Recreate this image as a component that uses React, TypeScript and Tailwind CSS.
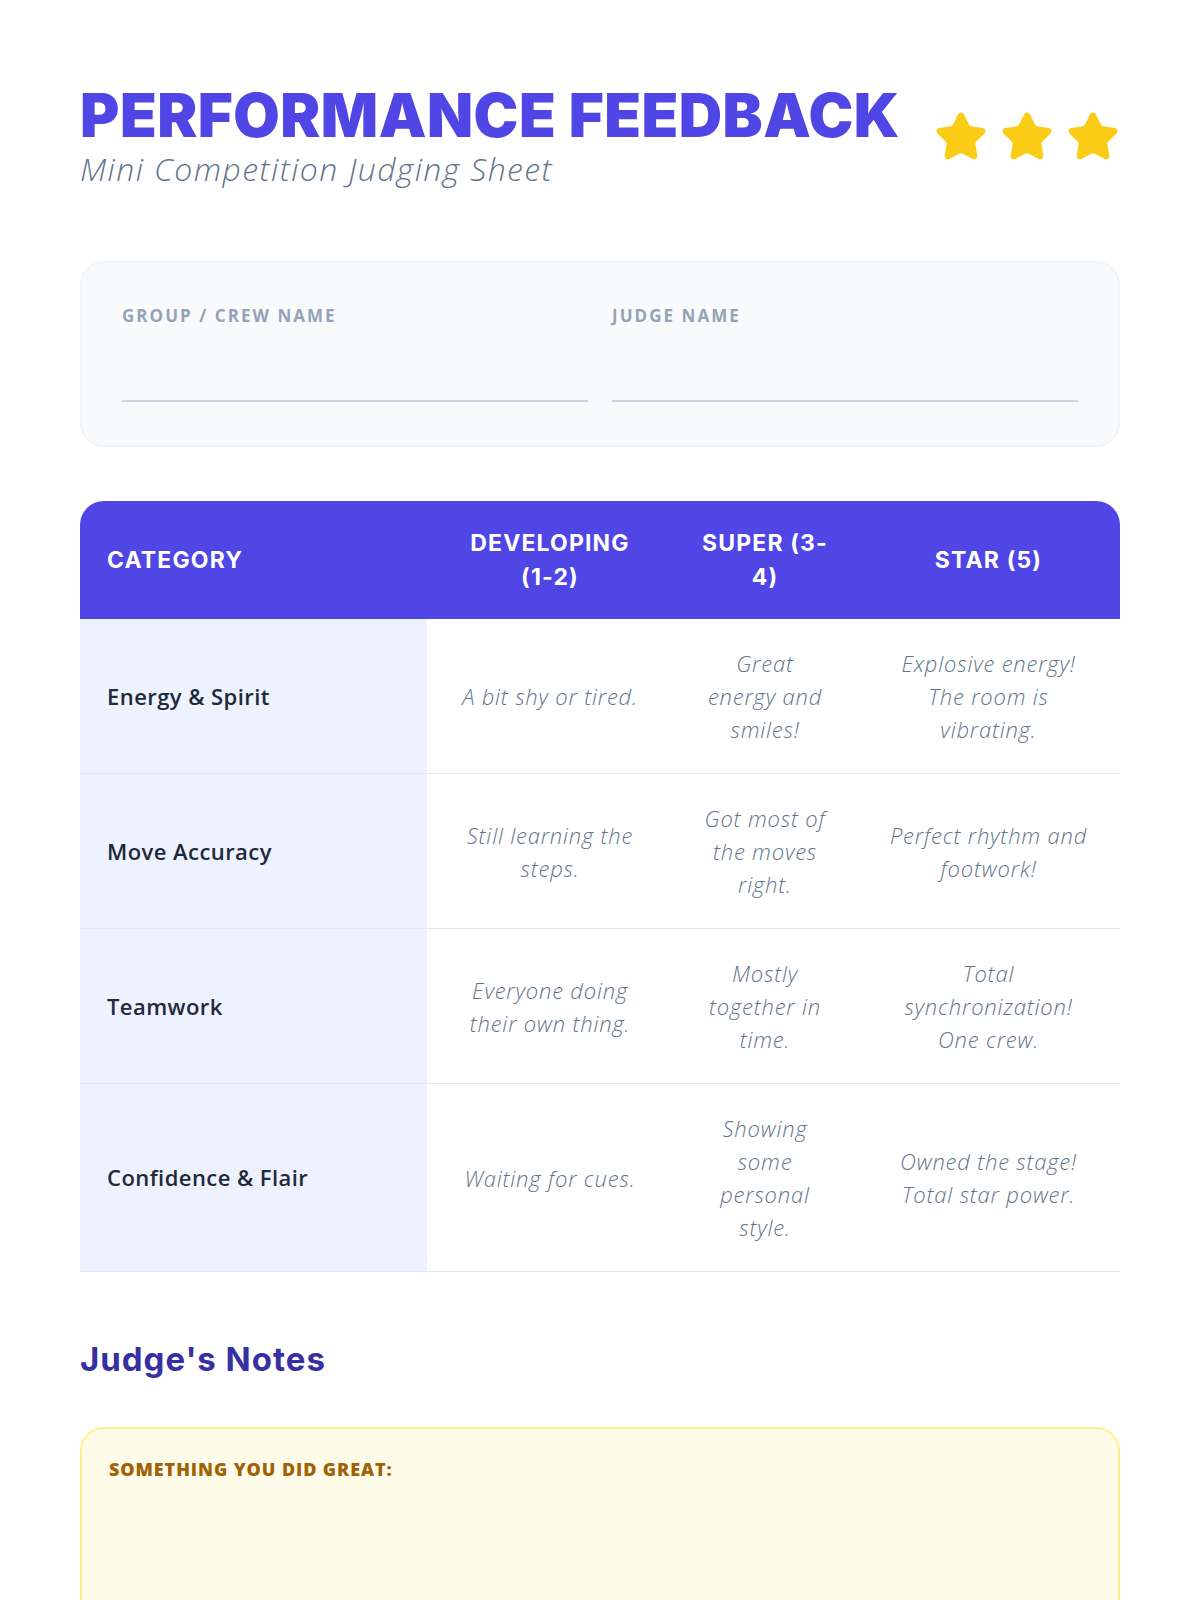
import React from "react";

const rows = [
  {
    name: "Energy & Spirit",
    dev: "A bit shy or tired.",
    sup: "Great\nenergy and\nsmiles!",
    star: "Explosive energy!\nThe room is\nvibrating.",
  },
  {
    name: "Move Accuracy",
    dev: "Still learning the\nsteps.",
    sup: "Got most of\nthe moves\nright.",
    star: "Perfect rhythm and\nfootwork!",
  },
  {
    name: "Teamwork",
    dev: "Everyone doing\ntheir own thing.",
    sup: "Mostly\ntogether in\ntime.",
    star: "Total\nsynchronization!\nOne crew.",
  },
  {
    name: "Confidence & Flair",
    dev: "Waiting for cues.",
    sup: "Showing\nsome\npersonal\nstyle.",
    star: "Owned the stage!\nTotal star power.",
  },
];

function Star() {
  return (
    <svg width="54" height="54" viewBox="0 0 24 24" fill="#facc15" stroke="#facc15" strokeWidth="1.8" strokeLinejoin="round">
      <path d="M11.525 2.295a.53.53 0 0 1 .95 0l2.31 4.679a2.123 2.123 0 0 0 1.595 1.16l5.166.756a.53.53 0 0 1 .294.904l-3.736 3.638a2.123 2.123 0 0 0-.611 1.878l.882 5.14a.53.53 0 0 1-.771.56l-4.618-2.428a2.122 2.122 0 0 0-1.973 0L6.396 21.01a.53.53 0 0 1-.77-.56l.881-5.139a2.122 2.122 0 0 0-.611-1.879L2.16 9.795a.53.53 0 0 1 .294-.906l5.165-.755a2.122 2.122 0 0 0 1.597-1.16z" />
    </svg>
  );
}

const cell = "flex items-center justify-center whitespace-pre-line px-6 pt-7 pb-[27px] text-center text-[22px] font-light italic leading-[33px] tracking-[0.8px] text-[#64748b]";

export default function App() {
  return (
    <div className="min-h-screen bg-white font-['Open_Sans','Noto_Sans',sans-serif]">
      <div className="w-[1200px] px-20 pt-[85px]">
        {/* header */}
        <div className="flex items-center justify-between">
          <div>
            <h1 className="font-['Inter',sans-serif] text-[60px] font-black leading-none tracking-[0.5px] text-[#4f46e5]">
              PERFORMANCE FEEDBACK
            </h1>
            <p className="mt-1 text-[32px] font-light italic leading-[40px] tracking-[1.4px] text-[#64748b]">
              Mini Competition Judging Sheet
            </p>
          </div>
          <div className="flex gap-[12px]">
            <Star />
            <Star />
            <Star />
          </div>
        </div>

        {/* names */}
        <div className="mt-[72px] grid grid-cols-2 gap-6 rounded-3xl border-2 border-[#f1f5f9] bg-[#f8fafc] px-10 pt-10 pb-[43px]">
          <div>
            <div className="text-[17px] font-bold uppercase leading-[25px] tracking-[0.12em] text-[#94a3b8]">Group / Crew Name</div>
            <div className="mt-3 h-[62px] border-b-2 border-[#cbd5e1]"></div>
          </div>
          <div>
            <div className="text-[17px] font-bold uppercase leading-[25px] tracking-[0.12em] text-[#94a3b8]">Judge Name</div>
            <div className="mt-3 h-[62px] border-b-2 border-[#cbd5e1]"></div>
          </div>
        </div>

        {/* rubric */}
        <div className="mt-[54px]">
          <div className="grid grid-cols-[347px_246px_184px_263px] rounded-t-3xl bg-[#4f46e5] font-['Inter',sans-serif] text-[23px] font-bold uppercase leading-[34px] tracking-[0.05em] text-white">
            <div className="flex items-center py-[25px] pl-[27px] pr-6">Category</div>
            <div className="flex items-center justify-center whitespace-pre-line px-6 py-[25px] text-center">{"Developing\n(1-2)"}</div>
            <div className="flex items-center justify-center whitespace-pre-line px-6 py-[25px] text-center">{"Super (3-\n4)"}</div>
            <div className="flex items-center justify-center px-6 py-[25px] text-center">Star (5)</div>
          </div>
          {rows.map((r) => (
            <div key={r.name} className="grid grid-cols-[347px_246px_184px_263px] border-b border-[#e2e8f0]">
              <div className="flex items-center bg-[#eef2ff] pl-[27px] pr-6 text-[22px] font-semibold tracking-[0.02em] text-[#1e293b]">{r.name}</div>
              <div className={cell}>{r.dev}</div>
              <div className={cell}>{r.sup}</div>
              <div className={cell}>{r.star}</div>
            </div>
          ))}
        </div>

        {/* notes */}
        <h2 className="mt-[67px] font-['Inter',sans-serif] text-[33px] font-bold leading-[40px] tracking-[0.03em] text-[#3730a3]">Judge's Notes</h2>
        <div className="mt-[48px] min-h-[220px] rounded-3xl border-2 border-[#fef08a] bg-[#fefce8] px-[27px] pt-[27px] pb-6">
          <div className="text-[18px] font-extrabold uppercase leading-[27px] tracking-[0.05em] text-[#a16207]">Something you did great:</div>
        </div>
      </div>
    </div>
  );
}
